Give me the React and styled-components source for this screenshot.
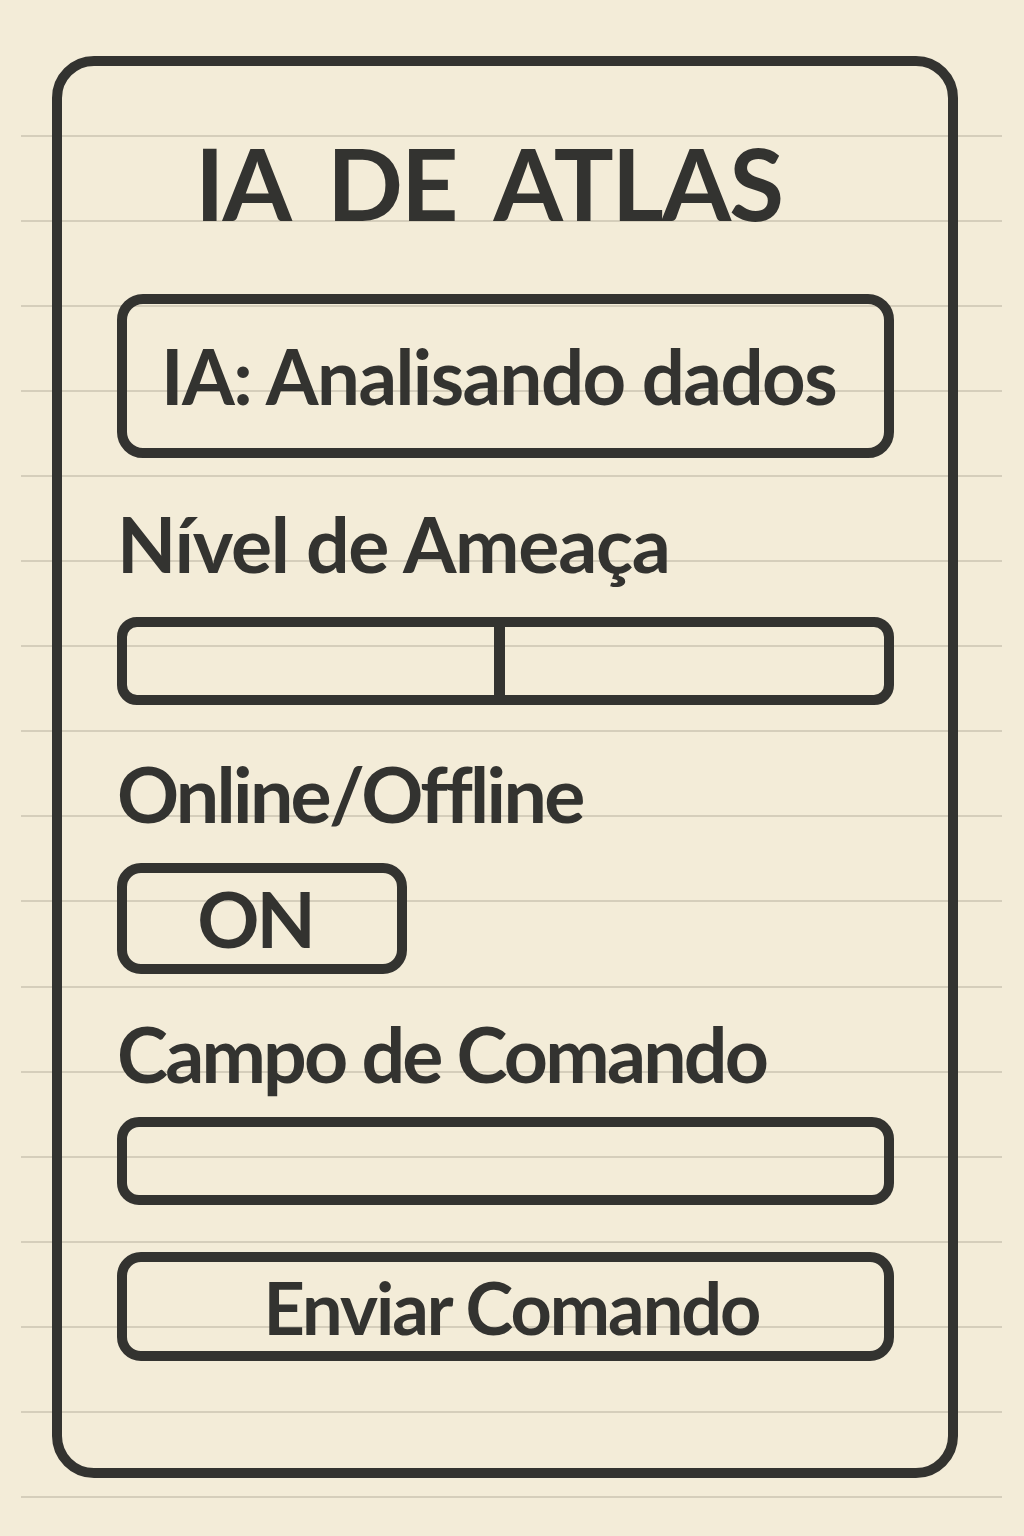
import styled, { createGlobalStyle } from "styled-components"

const ink = "#333330"
const paper = "#f3ecd8"
const rule = "#d5cebb"

const GlobalStyle = createGlobalStyle`
    html, body {
        margin: 0;
        padding: 0;
        background: ${paper};
    }
    * {
        box-sizing: border-box;
    }
`

function App() {
    return (
        <Page>
            <GlobalStyle />
            <Card>
                <Title>IA DE ATLAS</Title>
                <StatusBox>IA: Analisando dados</StatusBox>
                <Label $top={47} $spacing={-1.3}>Nível de Ameaça</Label>
                <ThreatBar>
                    <Segment $grow={367} />
                    <Divider />
                    <Segment $grow={380} />
                </ThreatBar>
                <Label $top={50} $spacing={-2.7}>Online/Offline</Label>
                <Toggle type="button">ON</Toggle>
                <Label $top={41} $spacing={-2.8}>Campo de Comando</Label>
                <CommandInput type="text" />
                <SendButton type="button">Enviar Comando</SendButton>
            </Card>
        </Page>
    )
}

export default App

const Page = styled.div`
    min-height: 1536px;
    padding-top: 56px;
    padding-left: 52px;
    font-family: "Lato", "DejaVu Sans", sans-serif;
    color: ${ink};
    background-color: ${paper};
    background-image:
        linear-gradient(${paper}, ${paper}),
        repeating-linear-gradient(
            to bottom,
            transparent 0,
            transparent 49.5px,
            ${rule} 49.5px,
            ${rule} 51.5px,
            transparent 51.5px,
            transparent 85.1px
        );
    background-size: 100% 100px, 981px 100%;
    background-position: 0 0, 21px 0;
    background-repeat: no-repeat, no-repeat;
`

const Card = styled.div`
    width: 906px;
    height: 1422px;
    border: 10px solid ${ink};
    border-radius: 42px;
    padding: 64px 54px 0 55px;
    display: flex;
    flex-direction: column;
`

const Title = styled.h1`
    margin: 0;
    font-size: 100px;
    line-height: 1;
    font-weight: 700;
    letter-spacing: -2px;
    word-spacing: 18px;
    text-align: center;
    padding-right: 34px;
    padding-top: 2px;
`

const StatusBox = styled.div`
    margin-top: 62px;
    height: 164px;
    border: 10px solid ${ink};
    border-radius: 26px;
    display: flex;
    align-items: center;
    padding-left: 34px;
    font-size: 76px;
    font-weight: 700;
    line-height: 1;
    letter-spacing: -1.5px;
`

const Label = styled.div`
    margin-top: ${(p) => p.$top}px;
    font-size: 77px;
    font-weight: 700;
    line-height: 1;
    letter-spacing: ${(p) => p.$spacing}px;
`

const ThreatBar = styled.div`
    margin-top: 35px;
    height: 88px;
    border: 10px solid ${ink};
    border-radius: 20px;
    display: flex;
`

const Segment = styled.div`
    flex: ${(p) => p.$grow} 1 0;
`

const Divider = styled.div`
    width: 11px;
    background: ${ink};
`

const Toggle = styled.button`
    margin-top: 31px;
    width: 290px;
    height: 111px;
    border: 10px solid ${ink};
    border-radius: 24px;
    background: transparent;
    color: ${ink};
    font-family: inherit;
    font-size: 77px;
    font-weight: 700;
    line-height: 1;
    letter-spacing: -3px;
    padding: 0 14px 0 0;
`

const CommandInput = styled.input`
    margin-top: 25px;
    height: 88px;
    width: 100%;
    border: 10px solid ${ink};
    border-radius: 22px;
    background: transparent;
    outline: none;
    padding: 0 20px;
    font-family: inherit;
    font-size: 40px;
    color: ${ink};
`

const SendButton = styled.button`
    margin-top: 47px;
    height: 109px;
    width: 100%;
    border: 10px solid ${ink};
    border-radius: 24px;
    background: transparent;
    color: ${ink};
    font-family: inherit;
    font-size: 72px;
    font-weight: 700;
    line-height: 1;
    letter-spacing: -2px;
    padding: 0 0 0 12px;
`
